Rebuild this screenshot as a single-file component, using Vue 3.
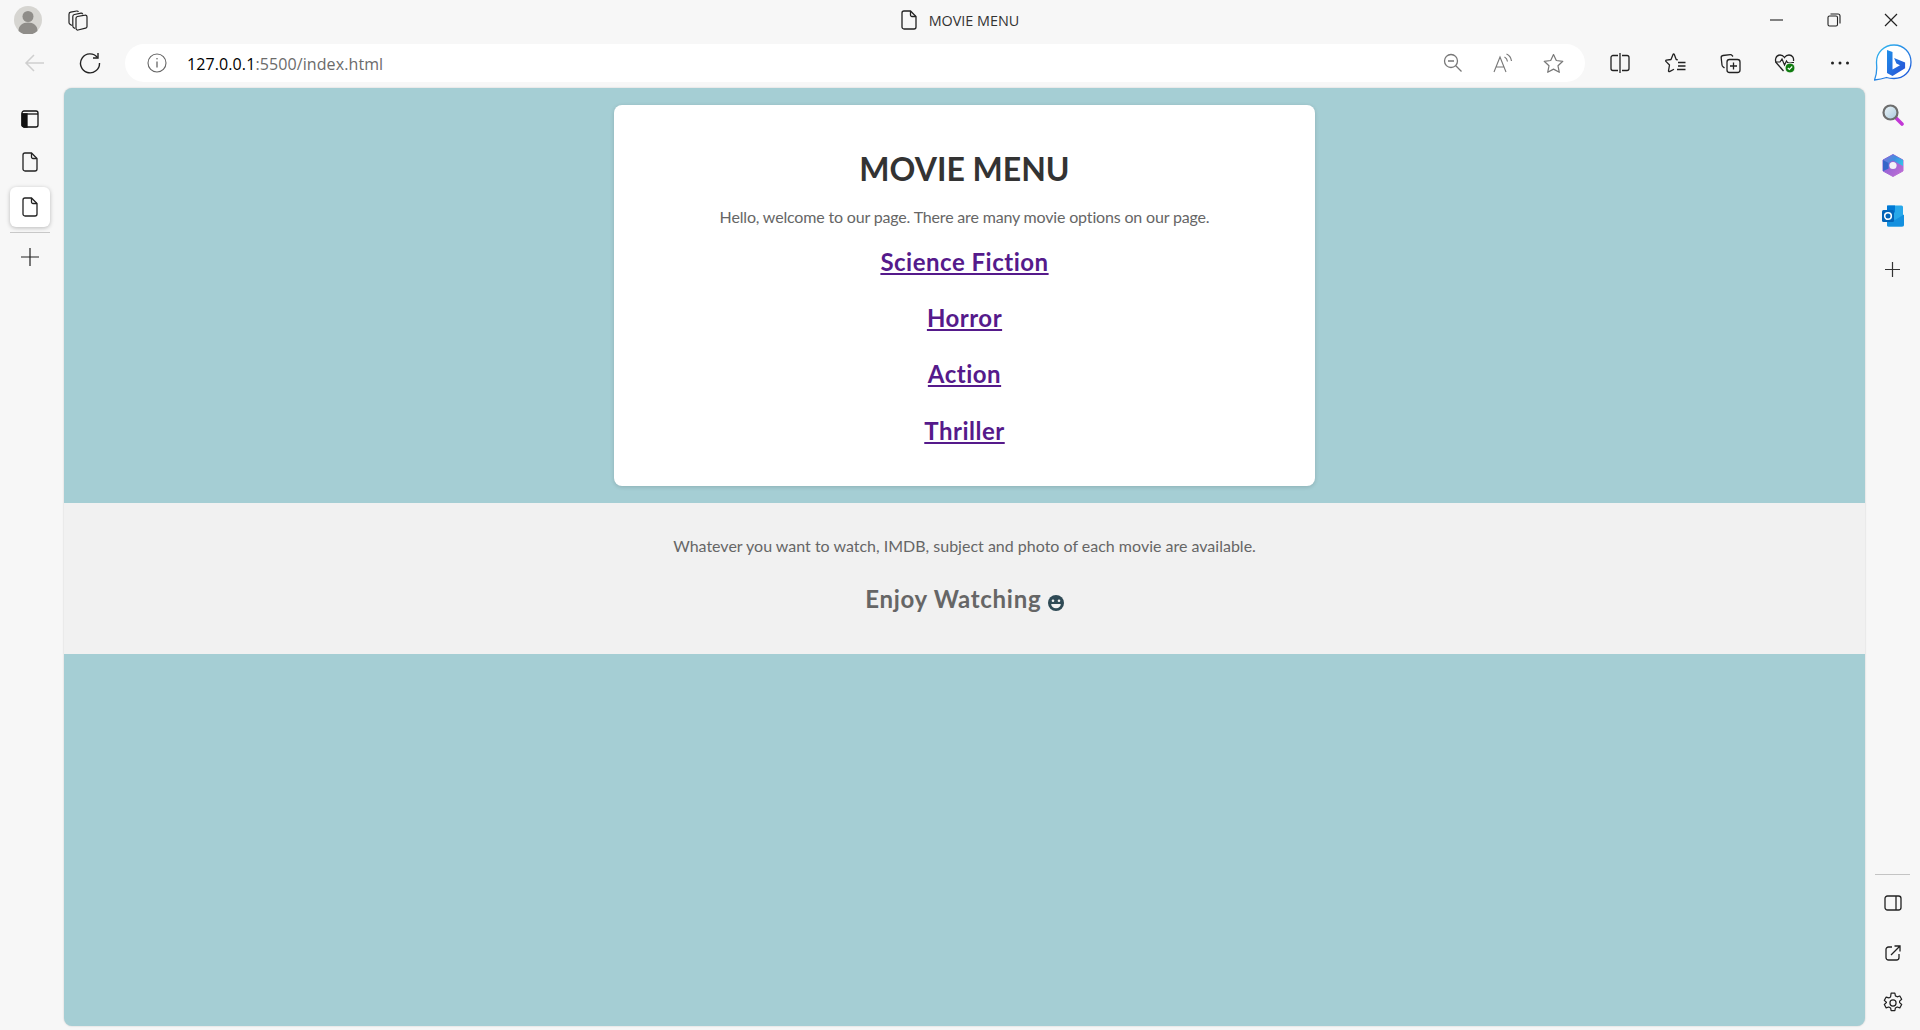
<template>
  <div class="window">
    <header class="titlebar">
      <div class="title-left">
        <svg class="avatar" width="28" height="28" viewBox="0 0 28 28">
          <circle cx="14" cy="14" r="14" fill="#d6d5d1" />
          <circle cx="14" cy="10.5" r="5.5" fill="#8f8d89" />
          <path d="M4.5 25c0-5.5 4-8.5 9.500-8.500s9.500 3 9.500 8.500a14 14 0 0 1-19 0z" fill="#8f8d89" />
        </svg>
        <svg class="tabs-icon" width="20" height="21" viewBox="0 0 20 21" fill="none" stroke="#222" stroke-width="1.200">
          <path d="M9.500 6.500 17 5.200c1-.2 2 .6 2 1.700v9.500c0 .9-.6 1.600-1.400 1.800L10 20c-1 .2-2-.6-2-1.700V8.300c0-.9.600-1.600 1.500-1.800z" />
          <path d="M7 18.500 5.800 17.700c-.6-.4-1-1-1-1.800V6.500c0-1 .7-1.800 1.700-2l6.500-1.300c.8-.1 1.400.3 1.700 1" />
          <path d="M3.800 15.500 2 14.300c-.6-.4-1-1-1-1.700V4.200c0-1 .7-1.800 1.700-2l6-1.200c.8-.1 1.400.2 1.700.9" />
        </svg>
      </div>
      <div class="title-center">
        <svg width="16" height="20" viewBox="0 0 16 20" fill="none" stroke="#222" stroke-width="1.300">
          <path d="M3 1h6.500L15 6.500V17a2 2 0 0 1-2 2H3a2 2 0 0 1-2-2V3a2 2 0 0 1 2-2z" />
          <path d="M9.500 1v4a1.500 1.500 0 0 0 1.500 1.500h4" />
        </svg>
        <span>MOVIE MENU</span>
      </div>
      <div class="title-right">
        <svg width="14" height="14" viewBox="0 0 14 14" stroke="#222" stroke-width="1.100"><path d="M0 7h13" /></svg>
        <svg width="14" height="14" viewBox="0 0 14 14" fill="none" stroke="#222" stroke-width="1.100">
          <rect x="1" y="3" width="9.500" height="10" rx="1.500" />
          <path d="M3.500 1h7.500a2 2 0 0 1 2 2v7.500" />
        </svg>
        <svg width="14" height="14" viewBox="0 0 14 14" stroke="#222" stroke-width="1.200"><path d="M1 1l12 12M13 1 1 13" /></svg>
      </div>
    </header>

    <div class="toolbar">
      <span class="slot">
        <svg width="22" height="22" viewBox="0 0 22 22" fill="none" stroke="#cfcfcf" stroke-width="1.500"><path d="M20 11H2M10 3l-8 8 8 8" /></svg>
      </span>
      <span class="slot">
        <svg width="22" height="22" viewBox="0 0 22 22" fill="none" stroke="#222" stroke-width="1.400">
          <path d="M18.500 5.500A9.500 9.500 0 1 0 20.500 11" />
          <path d="M19 1v5h-5" />
        </svg>
      </span>
      <div class="address">
        <svg width="20" height="20" viewBox="0 0 20 20" fill="none" stroke="#666" stroke-width="1.100">
          <circle cx="10" cy="10" r="9" />
          <path d="M10 8.500v6" stroke-width="1.300" />
          <circle cx="10" cy="5.800" r=".8" fill="#666" stroke="none" />
        </svg>
        <span class="url"><b>127.0.0.1</b>:5500/index.html</span>
        <div class="address-actions">
          <svg width="20" height="20" viewBox="0 0 20 20" fill="none" stroke="#777" stroke-width="1.300">
            <circle cx="8" cy="8" r="6.500" /><path d="M12.800 12.800 18.500 18.500M5 8h6" />
          </svg>
          <svg width="20" height="20" viewBox="0 0 20 20" fill="none" stroke="#777" stroke-width="1.100">
            <path d="M1 19 7 4l6 15M3 14h8" />
            <path d="M11.500 4c1.500.8 2.700 2.500 3 4.500M13.500 1c2.500 1 4.500 3.500 5 7" stroke-width="1.200" />
          </svg>
          <svg width="21" height="21" viewBox="0 0 21 21" fill="none" stroke="#777" stroke-width="1.200">
            <path d="M10.500 1.500 13.300 7.500l6.500.8-4.800 4.500 1.300 6.500-5.800-3.200-5.800 3.200L6 12.800 1.200 8.300l6.500-.8z" stroke-linejoin="round" />
          </svg>
        </div>
      </div>
      <div class="tool-actions">
        <span class="slot">
          <svg width="20" height="20" viewBox="0 0 20 20" fill="none" stroke="#222" stroke-width="1.300">
            <path d="M8 2.500H3a2 2 0 0 0-2 2v11a2 2 0 0 0 2 2h5M12 2.500h5a2 2 0 0 1 2 2v11a2 2 0 0 1-2 2h-5M10 0v20" />
          </svg>
        </span>
        <span class="slot">
          <svg width="21" height="21" viewBox="0 0 21 21" fill="none" stroke="#222" stroke-width="1.300">
            <path d="M12.800 6.800 11.200 6.500 9.300 1.500c-.3-.7-1-.7-1.300 0L6 6.500l-4.700.7c-.6.100-.8.800-.4 1.200L4.500 12l-1 5.800c-.1.600.5 1.100 1 .8l4.500-2.400" stroke-linejoin="round" />
            <path d="M13 9.500h7.500M13 13h7.500M12 16.500h8.500" />
          </svg>
        </span>
        <span class="slot">
          <svg width="21" height="21" viewBox="0 0 21 21" fill="none" stroke="#222" stroke-width="1.300">
            <rect x="7" y="6.500" width="13" height="13" rx="2.500" />
            <path d="M13.500 9.500v7M10 13h7" />
            <path d="M13 3.500 12 2.300c-.4-.5-1-.8-1.700-.7L3 2.500C1.800 2.700 1 3.700 1.200 5l.8 7c.1.700.4 1.300 1 1.700L4.500 15" />
          </svg>
        </span>
        <span class="slot">
          <svg width="22" height="22" viewBox="0 0 22 22" fill="none">
            <path d="M6 15 2.500 11C.6 8.800 1.500 3 6 3c2 0 3.500 1 4.500 2.500C11.500 4 13 3 15 3c3.500 0 5 3 4.500 6" stroke="#222" stroke-width="1.300" />
            <path d="M1 10h5l2-3 2.500 6 2-4 1 1.500H20" stroke="#222" stroke-width="1.200" />
            <path d="M6 15l3.500 4" stroke="#222" stroke-width="1.300" />
            <circle cx="16" cy="16" r="5" fill="#107c10" stroke="#f7f7f7" />
            <path d="M13.800 16l1.600 1.500 2.800-3" stroke="#fff" stroke-width="1.100" />
          </svg>
        </span>
        <span class="slot">
          <svg width="20" height="6" viewBox="0 0 20 6" fill="#222"><circle cx="2.500" cy="3" r="1.500" /><circle cx="10" cy="3" r="1.500" /><circle cx="17.500" cy="3" r="1.500" /></svg>
        </span>
      </div>
      <svg class="bing" width="38" height="38" viewBox="0 0 38 38">
        <defs>
          <linearGradient id="bingRing" x1="0" y1="0" x2="1" y2="1">
            <stop offset="0" stop-color="#35c1f1" /><stop offset="1" stop-color="#1b4fd8" />
          </linearGradient>
          <linearGradient id="bingB" x1="0" y1="0" x2="1" y2="1">
            <stop offset="0" stop-color="#1f8fe8" /><stop offset="1" stop-color="#2a4fd6" />
          </linearGradient>
        </defs>
        <path d="M20 1C10 1 2.500 8.500 2.500 18c0 5 1.500 9-2 18 5-.5 9-1.500 12-2.500 2 .7 4.500 1 7.500 1 10 0 17-7 17-16.500S30 1 20 1z" fill="#fff" stroke="url(#bingRing)" stroke-width="1.300" />
        <path d="M13 6l5.500 2v17.500l7.500-4.300-3.600-1.700-2.300-5.500 11 4.600v5.700L18.500 32 13 29z" fill="url(#bingB)" />
      </svg>
    </div>

    <div class="workspace">
      <aside class="tab-rail">
        <svg class="rail-first" width="18" height="18" viewBox="0 0 18 18" fill="none" stroke="#111" stroke-width="1.300">
          <rect x="1" y="1" width="16" height="16" rx="2" />
          <path d="M1 4h16" />
          <path d="M1 4h5v13H3a2 2 0 0 1-2-2z" fill="#111" />
        </svg>
        <svg class="rail-doc" width="16" height="20" viewBox="0 0 16 20" fill="none" stroke="#222" stroke-width="1.300">
          <path d="M3 1h6.500L15 6.500V17a2 2 0 0 1-2 2H3a2 2 0 0 1-2-2V3a2 2 0 0 1 2-2z" />
          <path d="M9.500 1v4a1.500 1.500 0 0 0 1.500 1.500h4" />
        </svg>
        <div class="rail-active">
          <svg width="16" height="20" viewBox="0 0 16 20" fill="none" stroke="#222" stroke-width="1.300">
            <path d="M3 1h6.500L15 6.500V17a2 2 0 0 1-2 2H3a2 2 0 0 1-2-2V3a2 2 0 0 1 2-2z" />
            <path d="M9.500 1v4a1.500 1.500 0 0 0 1.500 1.500h4" />
          </svg>
        </div>
        <div class="rail-line"></div>
        <svg class="rail-plus" width="18" height="18" viewBox="0 0 18 18" stroke="#222" stroke-width="1.200"><path d="M9 0v18M0 9h18" /></svg>
      </aside>

      <main class="page">
        <section class="card">
          <h1>MOVIE MENU</h1>
          <p class="intro">Hello, welcome to our page. There are many movie options on our page.</p>
          <nav class="genres">
            <a v-for="genre in genres" :key="genre" href="#">{{ genre }}</a>
          </nav>
        </section>
        <footer class="strip">
          <p class="note">Whatever you want to watch, IMDB, subject and photo of each movie are available.</p>
          <h3 class="enjoy">
            Enjoy Watching
            <svg width="16" height="16" viewBox="0 0 16 16" role="img" aria-label="smile">
              <circle cx="8" cy="8" r="8" fill="#2f4a55" />
              <circle cx="5" cy="5.800" r="1.300" fill="#f1f1f1" />
              <circle cx="11" cy="5.800" r="1.300" fill="#f1f1f1" />
              <path d="M3.200 9h9.600c0 2.500-2 4.200-4.800 4.200S3.200 11.500 3.200 9z" fill="#f1f1f1" />
            </svg>
          </h3>
        </footer>
      </main>

      <aside class="side-rail">
        <div class="side-top">
          <svg width="22" height="22" viewBox="0 0 22 22">
            <defs>
              <linearGradient id="lens" x1="0" y1="0" x2="1" y2="1">
                <stop offset="0" stop-color="#eef5f8" /><stop offset="1" stop-color="#a8c9dd" />
              </linearGradient>
            </defs>
            <path d="M13 13l7 7" stroke="#c238d6" stroke-width="3.600" stroke-linecap="round" />
            <circle cx="8.500" cy="8.500" r="7" fill="url(#lens)" stroke="#6d6d6d" stroke-width="2.200" />
          </svg>
          <svg width="22" height="23" viewBox="0 0 22 23">
            <defs>
              <linearGradient id="m1" x1="0" y1="0" x2="1" y2=".6">
                <stop offset="0" stop-color="#8a6fd8" /><stop offset=".55" stop-color="#3f8fe0" /><stop offset="1" stop-color="#35c4e8" />
              </linearGradient>
              <linearGradient id="m2" x1="0" y1="0" x2="1" y2="1">
                <stop offset="0" stop-color="#7a5cd6" /><stop offset="1" stop-color="#c46fd4" />
              </linearGradient>
            </defs>
            <path d="M11 .5 21 6v11L11 22.500 1 17V6z" fill="url(#m2)" stroke="url(#m2)" stroke-width="1" stroke-linejoin="round" />
            <path d="M11 .5 21 6v6l-5.500-3L11 6.500 6.500 9v5.500L1 17V6z" fill="url(#m1)" stroke-linejoin="round" />
            <path d="M1 6v11l5.500-2.500V9z" fill="#3566c8" />
            <circle cx="11" cy="11.500" r="3.600" fill="#f3f1f8" />
          </svg>
          <svg width="22" height="22" viewBox="0 0 22 22">
            <rect x="5" y="0.500" width="16" height="21" rx="1.500" fill="#28a8ea" />
            <rect x="5" y="0.500" width="8" height="7" fill="#0078d4" />
            <path d="M5 10l8 5 9-5.500V20a1.500 1.500 0 0 1-1.500 1.500H6.500A1.500 1.500 0 0 1 5 20z" fill="#1490df" />
            <rect x="0" y="5" width="12" height="12" rx="1.500" fill="#0364b8" />
            <circle cx="6" cy="11" r="3.300" fill="none" stroke="#fff" stroke-width="1.600" />
          </svg>
          <svg class="side-plus" width="15" height="15" viewBox="0 0 15 15" stroke="#333" stroke-width="1.200"><path d="M7.500 0v15M0 7.500h15" /></svg>
        </div>
        <div class="side-bottom">
          <div class="side-line"></div>
          <svg width="18" height="16" viewBox="0 0 18 16" fill="none" stroke="#222" stroke-width="1.300">
            <rect x="1" y="1" width="16" height="14" rx="2.500" /><path d="M12 1v14" />
          </svg>
          <svg class="side-share" width="16" height="16" viewBox="0 0 16 16" fill="none" stroke="#222" stroke-width="1.300">
            <path d="M7 2H3.500A2.500 2.500 0 0 0 1 4.500v8A2.500 2.500 0 0 0 3.500 15h8a2.500 2.500 0 0 0 2.500-2.500V9" />
            <path d="M6 10 15 1M9.500 1H15v5.500" />
          </svg>
          <svg class="side-gear" width="22" height="22" viewBox="0 0 20 20" fill="none" stroke="#222" stroke-width="1.100">
            <circle cx="10" cy="10" r="2.800" />
            <path d="M8.300 1h3.400l.5 2.500 1.600.9 2.400-.8 1.700 3-1.900 1.700v1.400l1.900 1.700-1.700 3-2.400-.8-1.600.9-.5 2.500H8.300l-.5-2.500-1.600-.9-2.400.8-1.700-3 1.900-1.700V9.300L2.100 7.600l1.700-3 2.400.8 1.600-.9z" stroke-linejoin="round" />
          </svg>
        </div>
      </aside>
    </div>
  </div>
</template>

<script setup>
const genres = ['Science Fiction', 'Horror', 'Action', 'Thriller']
</script>

<style>
html,
body {
  margin: 0;
  background: #f7f7f7;
}
</style>

<style scoped>
.window {
  width: 1920px;
  height: 1030px;
  display: flex;
  flex-direction: column;
  overflow: hidden;
  background: #f7f7f7;
  font-family: "Open Sans", sans-serif;
}

.titlebar {
  height: 40px;
  display: grid;
  grid-template-columns: 1fr auto 1fr;
  align-items: center;
}

.title-left {
  display: flex;
  align-items: center;
  gap: 26px;
  padding-left: 14px;
}

.title-center {
  display: flex;
  align-items: center;
  gap: 12px;
  font-size: 14.400px;
  color: #333;
}

.title-right {
  display: flex;
  justify-content: flex-end;
  gap: 43px;
  padding-right: 22px;
}

.toolbar {
  height: 48px;
  display: flex;
  align-items: center;
  gap: 15px;
  padding: 0 8px 2px 15px;
  box-sizing: border-box;
}

.slot {
  width: 40px;
  height: 38px;
  display: flex;
  align-items: center;
  justify-content: center;
  flex: none;
}

.address {
  width: 1460px;
  height: 38px;
  flex: none;
  box-sizing: border-box;
  display: flex;
  align-items: center;
  padding: 0 21px 0 22px;
  border-radius: 19px;
  background: #fff;
}

.url {
  margin: 1px 0 0 20px;
  font-size: 16px;
  letter-spacing: 0.1px;
  color: #6b6b6b;
}

.url b {
  font-weight: 400;
  color: #000;
}

.address-actions {
  margin-left: auto;
  display: flex;
  align-items: center;
  gap: 30px;
}

.tool-actions {
  display: flex;
  gap: 15px;
}

.bing {
  flex: none;
  margin-left: -1px;
}

.workspace {
  flex: 1;
  min-height: 0;
  display: flex;
  padding-bottom: 4px;
}

.tab-rail {
  width: 64px;
  flex: none;
  display: flex;
  flex-direction: column;
  align-items: center;
  padding-right: 5px;
  box-sizing: border-box;
}

.rail-first {
  margin-top: 22px;
}

.rail-doc {
  margin-top: 24px;
}

.rail-active {
  width: 40px;
  height: 40px;
  margin-top: 15px;
  display: flex;
  align-items: center;
  justify-content: center;
  border-radius: 6px;
  background: #fff;
  box-shadow: 0 1px 4px rgba(0, 0, 0, 0.25);
}

.rail-line {
  width: 40px;
  height: 1px;
  margin-top: 5px;
  background: #c8c8c8;
}

.rail-plus {
  margin-top: 15px;
}

.page {
  width: 1801px;
  flex: none;
  display: flex;
  flex-direction: column;
  border-radius: 8px;
  background: #a5ced4;
  box-shadow: 0 0 2px rgba(0, 0, 0, 0.2);
  overflow: hidden;
}

.card {
  width: 701px;
  height: 381px;
  box-sizing: border-box;
  align-self: center;
  margin-top: 17px;
  padding-top: 42px;
  border-radius: 8px;
  background: #fff;
  box-shadow: 0 1px 4px rgba(0, 0, 0, 0.15);
  text-align: center;
  font-family: Lato, sans-serif;
}

h1 {
  margin: 0;
  font-size: 32px;
  line-height: 44px;
  font-weight: 700;
  color: #333;
}

.intro {
  margin: 15px 0 0;
  font-size: 16px;
  line-height: 22px;
  letter-spacing: -0.17px;
  color: #666;
}

.genres {
  display: flex;
  flex-direction: column;
  align-items: center;
  gap: 22.200px;
  margin-top: 17px;
}

.genres a {
  font-size: 24px;
  line-height: 34px;
  font-weight: 700;
  letter-spacing: 0.5px;
  color: #551a8b;
}

.strip {
  height: 151px;
  margin-top: 17px;
  box-sizing: border-box;
  padding-top: 32px;
  background: #f1f1f1;
  text-align: center;
  font-family: Lato, sans-serif;
}

.note {
  margin: 0;
  font-size: 16px;
  line-height: 22px;
  color: #666;
}

.enjoy {
  margin: 27px 0 0;
  font-size: 24px;
  line-height: 30px;
  font-weight: 700;
  letter-spacing: 0.7px;
  color: #666;
}

.enjoy svg {
  vertical-align: -3px;
}

.side-rail {
  flex: 1;
  display: flex;
  flex-direction: column;
  align-items: center;
  justify-content: space-between;
  padding: 16px 0 12px;
  box-sizing: border-box;
}

.side-top,
.side-bottom {
  display: flex;
  flex-direction: column;
  align-items: center;
}

.side-top {
  gap: 28px;
}

.side-plus {
  margin-top: 7px;
}

.side-line {
  width: 35px;
  height: 1px;
  margin-bottom: 20px;
  background: #c4c4c4;
}

.side-share {
  margin-top: 34px;
}

.side-gear {
  margin-top: 31px;
}
</style>
